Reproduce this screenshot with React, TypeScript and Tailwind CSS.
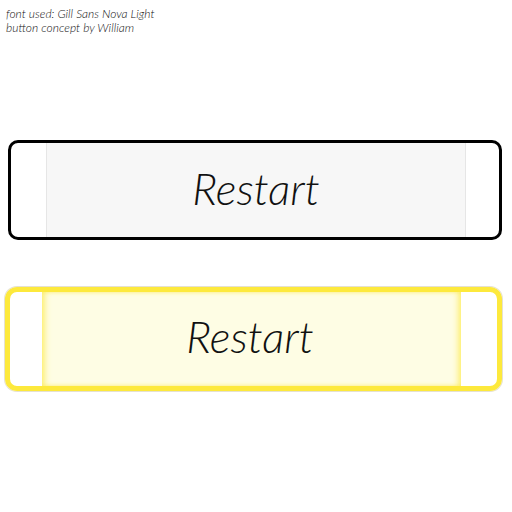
export default function App() {
  const font = { fontFamily: '"Lato", "Open Sans", sans-serif' };
  return (
    <div className="w-[512px] h-[512px] bg-white relative overflow-hidden" style={font}>
      <div className="pt-[7px] pl-[6px] text-[12px] leading-[14px] italic font-light text-[#111]">
        <div>font used: Gill Sans Nova Light</div>
        <div>button concept by William</div>
      </div>
      <div className="mt-[105px] ml-[8px] w-[494px] h-[100px] border-[3px] border-black rounded-[10px] flex pl-[35px] pr-[33px]">
        <div className="flex-1 bg-[#f7f7f7] border-x border-[#e6e6e6] flex items-center justify-center">
          <span className="italic font-light text-[44px] leading-none text-[#111] -mt-[4px]">Restart</span>
        </div>
      </div>
      <div className="mt-[47px] ml-[5px] w-[497px] h-[104px] border-[5px] border-[#fde93c] rounded-[12px] flex pl-[32px] pr-[36px] shadow-[0_0_0_1px_rgba(180,170,120,0.35)]">
        <div className="flex-1 bg-[#fefde4] shadow-[inset_6px_0_6px_-3px_rgba(253,233,60,0.6),inset_-6px_0_6px_-3px_rgba(253,233,60,0.6),inset_0_0_4px_rgba(253,233,60,0.4)] flex items-center justify-center">
          <span className="italic font-light text-[44px] leading-none text-[#111] -mt-[6px] -ml-[3px]">Restart</span>
        </div>
      </div>
    </div>
  );
}
